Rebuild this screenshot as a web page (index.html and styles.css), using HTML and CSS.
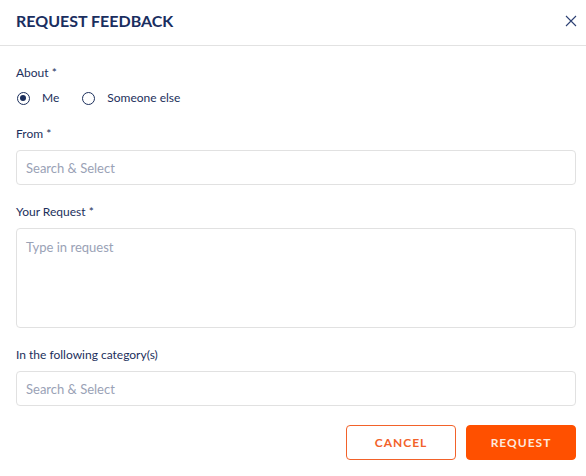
FILE: index.html
```html
<!DOCTYPE html>
<html>
<head>
<meta charset="utf-8">
<link rel="stylesheet" href="styles.css">
</head>
<body>
<div class="modal">
  <div class="header">
    <h1 class="title">REQUEST FEEDBACK</h1>
    <svg class="close" width="12" height="12" viewBox="0 0 12 12"><path d="M1 1L11 11M11 1L1 11" stroke="#2c4073" stroke-width="1.1" fill="none"/></svg>
  </div>
  <div class="body">
    <div class="field">
      <div class="label">About *</div>
      <div class="radios">
        <label class="radio"><span class="dot checked"></span><span>Me</span></label>
        <label class="radio"><span class="dot"></span><span>Someone else</span></label>
      </div>
    </div>
    <div class="field">
      <div class="label">From *</div>
      <div class="input">Search &amp; Select</div>
    </div>
    <div class="field">
      <div class="label">Your Request *</div>
      <div class="input textarea">Type in request</div>
    </div>
    <div class="field">
      <div class="label">In the following category(s)</div>
      <div class="input">Search &amp; Select</div>
    </div>
    <div class="actions">
      <button class="btn cancel">CANCEL</button>
      <button class="btn primary">REQUEST</button>
    </div>
  </div>
</div>
</body>
</html>
```

FILE: styles.css
```css
* { box-sizing: border-box; }
body {
  margin: 0;
  background: #fff;
  font-family: Lato, "Open Sans", sans-serif;
  color: #1c2f5c;
}
.header {
  height: 46px;
  border-bottom: 1px solid #e2e2e2;
  display: flex;
  align-items: center;
  justify-content: space-between;
  padding: 0 10px 0 16px;
}
.title {
  margin: 0;
  font-size: 16px;
  font-weight: 700;
  color: #1a2e5f;
  position: relative;
  top: -2px;
}
.close {
  position: relative;
  top: -2px;
  margin-right: -1px;
}
.body {
  padding: 19px 10px 0 16px;
}
.field {
  margin-bottom: 19px;
}
.label {
  font-size: 12px;
  line-height: 16px;
  margin-bottom: 8px;
  color: #1c2f5c;
}
.radios {
  display: flex;
  gap: 23px;
  padding-left: 1px;
  margin-top: 9px;
  padding-bottom: 1px;
}
.radio {
  display: flex;
  align-items: center;
  gap: 12px;
  font-size: 12px;
  line-height: 16px;
}
.dot {
  width: 13px;
  height: 13px;
  border: 1.3px solid #1c2f5c;
  border-radius: 50%;
  display: inline-block;
  position: relative;
}
.dot.checked::after {
  content: "";
  position: absolute;
  left: 2.2px; top: 2.2px;
  width: 6px; height: 6px;
  border-radius: 50%;
  background: #1c2f5c;
}
.input {
  height: 35px;
  border: 1px solid #e1e1e1;
  border-radius: 4px;
  padding: 0 9px;
  display: flex;
  align-items: center;
  font-size: 13px;
  color: #9aa2b6;
}
.textarea {
  height: 100px;
  align-items: flex-start;
  padding-top: 10px;
}
.actions {
  display: flex;
  justify-content: flex-end;
  gap: 10px;
  margin-top: 19px;
}
.btn {
  width: 110px;
  height: 35px;
  border-radius: 4px;
  font-family: Lato, sans-serif;
  font-size: 12px;
  font-weight: 700;
  letter-spacing: 1px;
  cursor: pointer;
}
.cancel {
  background: #fff;
  border: 1px solid #f2622a;
  color: #f2622a;
}
.primary {
  background: #ff5000;
  border: 1px solid #ff5000;
  color: #fde8dc;
}
```
